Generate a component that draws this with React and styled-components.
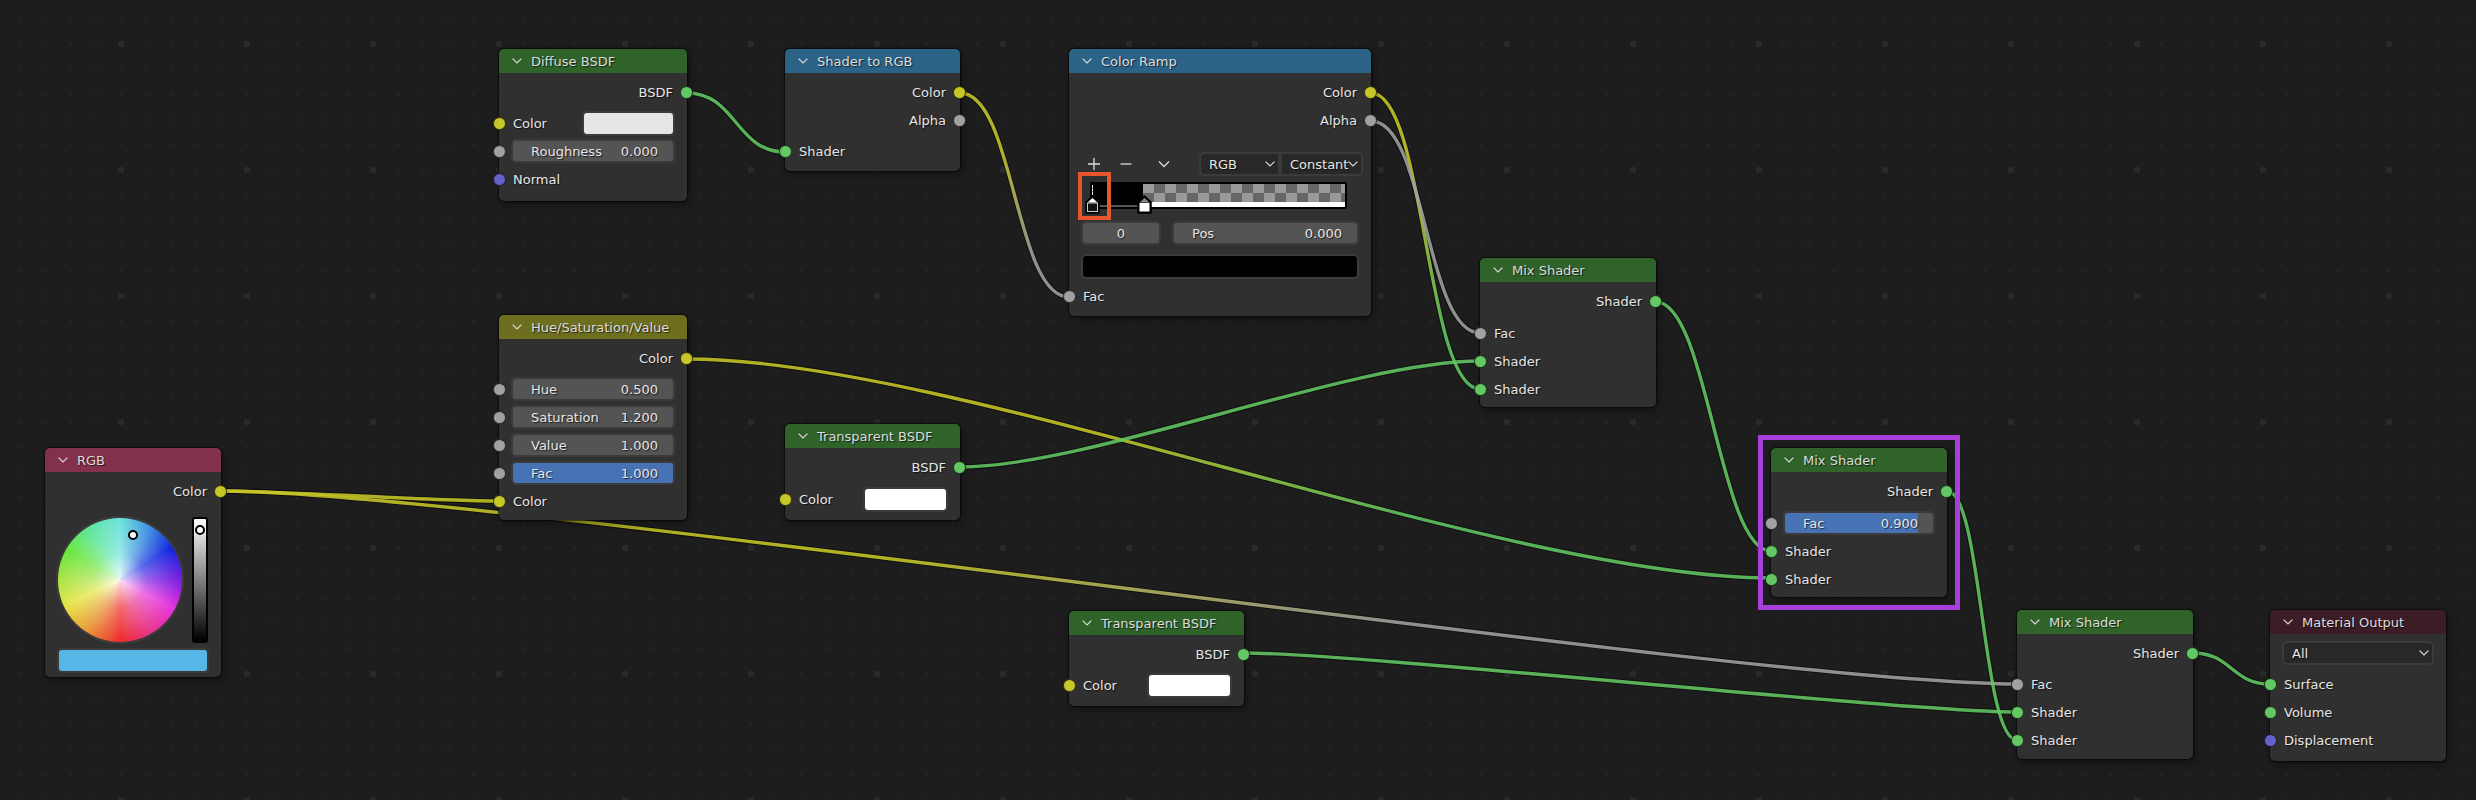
import React from 'react';
import styled, { createGlobalStyle } from 'styled-components';

const GlobalStyle = createGlobalStyle`
  html, body { margin: 0; padding: 0; background: #1d1d1d; overflow: hidden; }
  body { font-family: "DejaVu Sans", "Liberation Sans", sans-serif; }
`;

const GREEN = '#2f6329';
const BLUE = '#2b6387';
const OLIVE = '#6e6e1f';
const CRIMSON = '#83314a';
const WINE = '#3c1d26';

const YELLOW = '#c7c729';
const GREY = '#a1a1a1';
const LIME = '#63c763';
const VIOLET = '#6363c7';

const Canvas = styled.div`
  position: relative;
  width: 2476px;
  height: 800px;
  overflow: hidden;
  background-color: #1d1d1d;
  background-image:
    radial-gradient(circle, #2a2a2a 3px, transparent 3.5px),
    radial-gradient(circle, #232323 1.4px, transparent 1.9px);
  background-size: 126px 126px, 25.2px 25.2px;
  background-position: 184px 485px, 234.4px 535.4px;
`;

const WireLayer = styled.svg`
  position: absolute;
  left: 0;
  top: 0;
`;

const NodeBox = styled.div`
  position: absolute;
  left: ${(p) => p.$x}px;
  top: ${(p) => p.$y}px;
  width: ${(p) => p.$w}px;
  height: ${(p) => p.$h}px;
  background: #303030;
  border-radius: 5px;
  box-shadow: 0 0 1px 1px rgba(0, 0, 0, 0.55), 2px 3px 9px rgba(0, 0, 0, 0.45);
  color: #e6e6e6;
  font-size: 13px;
  text-shadow: 1px 1px 1px rgba(0, 0, 0, 0.65);
`;

const NodeHeader = styled.div`
  display: flex;
  align-items: center;
  height: 24px;
  padding-left: 13px;
  gap: 9px;
  margin-bottom: 5px;
  background: ${(p) => p.$color};
  border-radius: 5px 5px 0 0;
  color: #dcdcdc;
`;

const Row = styled.div`
  position: relative;
  display: flex;
  align-items: center;
  justify-content: ${(p) => (p.$right ? 'flex-end' : 'flex-start')};
  gap: ${(p) => p.$gap || 0}px;
  height: 28px;
  padding: 0 12px;
  box-sizing: border-box;
`;

const Spacer = styled.div`
  height: ${(p) => p.$h}px;
`;

const Label = styled.span`
  margin: 0 2px;
  white-space: nowrap;
`;

const Socket = styled.span`
  position: absolute;
  top: 50%;
  ${(p) => (p.$right ? 'right' : 'left')}: -6px;
  width: 11px;
  height: 11px;
  margin-top: -6px;
  border-radius: 50%;
  background: ${(p) => p.$color};
  border: 0.5px solid rgba(0, 0, 0, 0.7);
`;

const Field = styled.div`
  position: relative;
  flex: ${(p) => (p.$w ? `0 0 ${p.$w}px` : '1')};
  display: flex;
  align-items: center;
  justify-content: ${(p) => (p.$center ? 'center' : 'space-between')};
  height: 24px;
  box-sizing: border-box;
  padding: 0 ${(p) => (p.$center ? 0 : 15)}px 0 ${(p) => (p.$center ? 0 : 18)}px;
  border: 2px solid #3b3b3b;
  border-radius: 5px;
  background: ${(p) => {
    if (p.$fill === undefined) return '#545454';
    return `linear-gradient(90deg, #4772b3 ${p.$fill}%, #545454 ${p.$fill}%)`;
  }};
`;

const Swatch = styled.div`
  flex: ${(p) => (p.$w ? `0 0 ${p.$w}px` : '1')};
  margin-left: ${(p) => (p.$w ? 'auto' : 0)};
  height: 25px;
  box-sizing: border-box;
  border: 2px solid #3b3b3b;
  border-radius: 5px;
  background: ${(p) => p.$color};
`;

const Dropdown = styled.div`
  flex: ${(p) => (p.$w ? `0 0 ${p.$w}px` : '1')};
  display: flex;
  align-items: center;
  justify-content: space-between;
  height: 24px;
  box-sizing: border-box;
  padding: 0 3px 0 8px;
  background: #282828;
  border: 2px solid #3b3b3b;
  border-radius: ${(p) => p.$radius || '5px'};
  margin-left: ${(p) => p.$ml || 0}px;
`;

const ToolIcon = styled.svg`
  flex: 0 0 26px;
  margin-left: ${(p) => p.$ml || 0}px;
`;

const RampWrap = styled.div`
  position: relative;
  height: 27px;
  margin: 4px 24px 10px 21px;
  box-sizing: border-box;
  border: 2px solid #000;
  border-radius: 2px;
  background: #000;
  display: flex;
`;

const RampBlack = styled.div`
  flex: 0 0 51px;
  border-bottom: 2px solid #555;
`;

const RampRest = styled.div`
  flex: 1;
  display: flex;
  flex-direction: column;
`;

const RampChecker = styled.div`
  flex: 1;
  background: repeating-conic-gradient(#666 0 25%, #999 0 50%) 0 0 / 22px 18px;
`;

const RampWhite = styled.div`
  height: 5px;
  background: #fff;
`;

const RampDash = styled.span`
  position: absolute;
  left: 0;
  top: 1px;
  width: 0;
  height: 10px;
  border-left: 1px dashed #fff;
`;

const RampHandle = styled.svg`
  position: absolute;
  left: ${(p) => p.$left}px;
  top: 11px;
`;

const ColorPicker = styled.div`
  display: flex;
  justify-content: space-between;
  padding: 12px 13px 3px;
`;

const Wheel = styled.div`
  position: relative;
  width: 124px;
  height: 124px;
  margin-top: 1px;
  border-radius: 50%;
  box-shadow: 0 0 0 2px #3c3c3c;
  background:
    radial-gradient(circle, rgba(255, 255, 255, 0.85) 0, rgba(255, 255, 255, 0.3) 30%, rgba(255, 255, 255, 0) 68%),
    conic-gradient(#6fe3dd 0deg, #3f8fe0 30deg, #1028e0 58deg, #7a1fe0 90deg, #e633dd 118deg, #e8358a 150deg,
      #ee2e2e 180deg, #e8a03a 215deg, #e6e64a 245deg, #a0e445 275deg, #6ae63f 300deg, #60e5a0 330deg, #6fe3dd 360deg);
`;

const ValueBar = styled.div`
  position: relative;
  width: 16px;
  height: 126px;
  box-sizing: border-box;
  border: 2px solid #000;
  border-radius: 3px;
  background: linear-gradient(#fff, #000);
`;

const PickerDot = styled.span`
  position: absolute;
  left: ${(p) => p.$left}px;
  top: ${(p) => p.$top}px;
  width: 6px;
  height: 6px;
  border: 2px solid #000;
  border-radius: 50%;
  background: #fff;
`;

const Annotation = styled.div`
  position: absolute;
  left: ${(p) => p.$x}px;
  top: ${(p) => p.$y}px;
  width: ${(p) => p.$w}px;
  height: ${(p) => p.$h}px;
  box-sizing: border-box;
  border: ${(p) => p.$line}px solid ${(p) => p.$color};
`;

const Chevron = () => (
  <svg width="10" height="6" viewBox="0 0 10 6" fill="none">
    <path d="M0.6 0.6 L5 5 L9.4 0.6" stroke="#dcdcdc" strokeWidth="1.2" />
  </svg>
);

const Node = ({ x, y, w, h, color, title, children }) => (
  <NodeBox $x={x} $y={y} $w={w} $h={h}>
    <NodeHeader $color={color}>
      <Chevron />
      <span>{title}</span>
    </NodeHeader>
    {children}
  </NodeBox>
);

const Output = ({ label, color }) => (
  <Row $right>
    <Label>{label}</Label>
    <Socket $right $color={color} />
  </Row>
);

const Input = ({ label, color }) => (
  <Row>
    <Socket $color={color} />
    <Label>{label}</Label>
  </Row>
);

const ValueInput = ({ label, value, fill }) => (
  <Row>
    <Socket $color={GREY} />
    <Field $fill={fill}>
      <span>{label}</span>
      <span>{value}</span>
    </Field>
  </Row>
);

const ColorInput = ({ color, w }) => (
  <Row>
    <Socket $color={YELLOW} />
    <Label>Color</Label>
    <Swatch $color={color} $w={w} />
  </Row>
);

// f is the handle length as a share of the wire's width, measured off the picture
const wires = [
  { id: 'w1', a: [221, 491], b: [499, 501], from: YELLOW, to: YELLOW, f: 0.25 },
  { id: 'w2', a: [221, 491], b: [2017, 684], from: YELLOW, to: GREY, f: 0.15 },
  { id: 'w3', a: [687, 93], b: [785, 152], from: LIME, to: LIME, f: 0.5 },
  { id: 'w4', a: [960, 93], b: [1069, 297], from: YELLOW, to: GREY, f: 0.5 },
  { id: 'w5', a: [1371, 93], b: [1480, 389], from: YELLOW, to: LIME, f: 0.5 },
  { id: 'w6', a: [1371, 121], b: [1480, 333], from: GREY, to: GREY, f: 0.5 },
  { id: 'w7', a: [687, 359], b: [1771, 578], from: YELLOW, to: LIME, f: 0.25 },
  { id: 'w8', a: [960, 467], b: [1480, 361], from: LIME, to: LIME, f: 0.25 },
  { id: 'w9', a: [1656, 302], b: [1771, 551], from: LIME, to: LIME, f: 0.45 },
  { id: 'w10', a: [1947, 491], b: [2017, 740], from: LIME, to: LIME, f: 0.5 },
  { id: 'w11', a: [1244, 653], b: [2017, 712], from: LIME, to: LIME, f: 0.15 },
  { id: 'w12', a: [2193, 653], b: [2270, 684], from: LIME, to: LIME, f: 0.5 },
];

const wirePath = ({ a, b, f }) => {
  const handle = (b[0] - a[0]) * f;
  return `M${a[0]} ${a[1]} C${a[0] + handle} ${a[1]} ${b[0] - handle} ${b[1]} ${b[0]} ${b[1]}`;
};

const Wires = () => (
  <WireLayer width="2476" height="800" fill="none">
    <defs>
      {wires.map((w) => (
        <linearGradient key={w.id} id={w.id} gradientUnits="userSpaceOnUse" x1={w.a[0]} y1="0" x2={w.b[0]} y2="0">
          <stop offset="0.38" stopColor={w.from} />
          <stop offset="0.66" stopColor={w.to} />
        </linearGradient>
      ))}
    </defs>
    {wires.map((w) => (
      <path key={w.id + 'o'} d={wirePath(w)} stroke="rgba(0,0,0,0.45)" strokeWidth="5.5" />
    ))}
    {wires.map((w) => (
      <path key={w.id} d={wirePath(w)} stroke={`url(#${w.id})`} strokeWidth="3.4" strokeOpacity="0.88" />
    ))}
  </WireLayer>
);

const App = () => (
  <Canvas>
    <GlobalStyle />
    <Wires />

    <Node x={45} y={448} w={176} h={229} color={CRIMSON} title="RGB">
      <Output label="Color" color={YELLOW} />
      <ColorPicker>
        <Wheel>
          <PickerDot $left={70} $top={12} />
        </Wheel>
        <ValueBar>
          <PickerDot $left={1} $top={6} />
        </ValueBar>
      </ColorPicker>
      <Row>
        <Swatch $color="#56b7e7" />
      </Row>
    </Node>

    <Node x={499} y={49} w={188} h={152} color={GREEN} title="Diffuse BSDF">
      <Output label="BSDF" color={LIME} />
      <Spacer $h={3} />
      <ColorInput color="#e6e6e6" w={93} />
      <ValueInput label="Roughness" value="0.000" />
      <Input label="Normal" color={VIOLET} />
    </Node>

    <Node x={785} y={49} w={175} h={122} color={BLUE} title="Shader to RGB">
      <Output label="Color" color={YELLOW} />
      <Output label="Alpha" color={GREY} />
      <Spacer $h={3} />
      <Input label="Shader" color={LIME} />
    </Node>

    <Node x={1069} y={49} w={302} h={267} color={BLUE} title="Color Ramp">
      <Output label="Color" color={YELLOW} />
      <Output label="Alpha" color={GREY} />
      <Spacer $h={16} />
      <Row>
        <ToolIcon width="26" height="16" viewBox="0 0 26 16" fill="none">
          <path d="M7 8 H19 M13 2 V14" stroke="#dcdcdc" strokeWidth="1.3" />
        </ToolIcon>
        <ToolIcon $ml={6} width="26" height="16" viewBox="0 0 26 16" fill="none">
          <path d="M7.5 8 H18.5" stroke="#dcdcdc" strokeWidth="1.3" />
        </ToolIcon>
        <ToolIcon $ml={12} width="26" height="16" viewBox="0 0 26 16" fill="none">
          <path d="M8 5.5 L13 10.5 L18 5.5" stroke="#dcdcdc" strokeWidth="1.3" />
        </ToolIcon>
        <Dropdown $w={81} $ml={22} $radius="5px 0 0 5px">
          <span>RGB</span>
          <Chevron />
        </Dropdown>
        <Dropdown $radius="0 5px 5px 0">
          <span>Constant</span>
          <Chevron />
        </Dropdown>
      </Row>
      <RampWrap>
        <RampBlack />
        <RampRest>
          <RampChecker />
          <RampWhite />
        </RampRest>
        <RampDash />
        <RampHandle $left={-7} width="15" height="19" viewBox="0 0 15 19">
          <path d="M7.5 1 L14 7 V18 H1 V7 Z" fill="#000" stroke="#000" strokeWidth="1.5" />
          <path d="M7.5 3 L12.5 7.5 H2.5 Z" fill="#fff" />
          <rect x="2.5" y="8" width="10" height="8.5" fill="#111" stroke="#ccc" strokeWidth="1" />
        </RampHandle>
        <RampHandle $left={45} width="15" height="19" viewBox="0 0 15 19">
          <path d="M7.5 1 L14 7 V18 H1 V7 Z" fill="#000" stroke="#000" strokeWidth="1.5" />
          <path d="M7.5 3 L12.5 7.5 H2.5 Z" fill="#888" />
          <rect x="2.5" y="8" width="10" height="8.5" fill="#fff" />
        </RampHandle>
      </RampWrap>
      <Row $gap={11}>
        <Field $w={80} $center>0</Field>
        <Field>
          <span>Pos</span>
          <span>0.000</span>
        </Field>
      </Row>
      <Spacer $h={5} />
      <Row>
        <Swatch $color="#000" />
      </Row>
      <Spacer $h={2} />
      <Input label="Fac" color={GREY} />
    </Node>

    <Node x={499} y={315} w={188} h={205} color={OLIVE} title="Hue/Saturation/Value">
      <Output label="Color" color={YELLOW} />
      <Spacer $h={3} />
      <ValueInput label="Hue" value="0.500" />
      <ValueInput label="Saturation" value="1.200" />
      <ValueInput label="Value" value="1.000" />
      <ValueInput label="Fac" value="1.000" fill={100} />
      <Input label="Color" color={YELLOW} />
    </Node>

    <Node x={785} y={424} w={175} h={96} color={GREEN} title="Transparent BSDF">
      <Output label="BSDF" color={LIME} />
      <Spacer $h={4} />
      <ColorInput color="#fff" w={85} />
    </Node>

    <Node x={1069} y={611} w={175} h={95} color={GREEN} title="Transparent BSDF">
      <Output label="BSDF" color={LIME} />
      <Spacer $h={3} />
      <ColorInput color="#fff" w={85} />
    </Node>

    <Node x={1480} y={258} w={176} h={149} color={GREEN} title="Mix Shader">
      <Output label="Shader" color={LIME} />
      <Spacer $h={4} />
      <Input label="Fac" color={GREY} />
      <Input label="Shader" color={LIME} />
      <Input label="Shader" color={LIME} />
    </Node>

    <Node x={1771} y={448} w={176} h={149} color={GREEN} title="Mix Shader">
      <Output label="Shader" color={LIME} />
      <Spacer $h={4} />
      <ValueInput label="Fac" value="0.900" fill={90} />
      <Input label="Shader" color={LIME} />
      <Input label="Shader" color={LIME} />
    </Node>

    <Node x={2017} y={610} w={176} h={149} color={GREEN} title="Mix Shader">
      <Output label="Shader" color={LIME} />
      <Spacer $h={3} />
      <Input label="Fac" color={GREY} />
      <Input label="Shader" color={LIME} />
      <Input label="Shader" color={LIME} />
    </Node>

    <Node x={2270} y={610} w={176} h={151} color={WINE} title="Material Output">
      <Row>
        <Dropdown>
          <span>All</span>
          <Chevron />
        </Dropdown>
      </Row>
      <Spacer $h={3} />
      <Input label="Surface" color={LIME} />
      <Input label="Volume" color={LIME} />
      <Input label="Displacement" color={VIOLET} />
    </Node>

    <Annotation $x={1078} $y={172} $w={33} $h={48} $line={4} $color="#e8562c" />
    <Annotation $x={1758} $y={435} $w={202} $h={175} $line={5} $color="#a83fdc" />
  </Canvas>
);

export default App;
